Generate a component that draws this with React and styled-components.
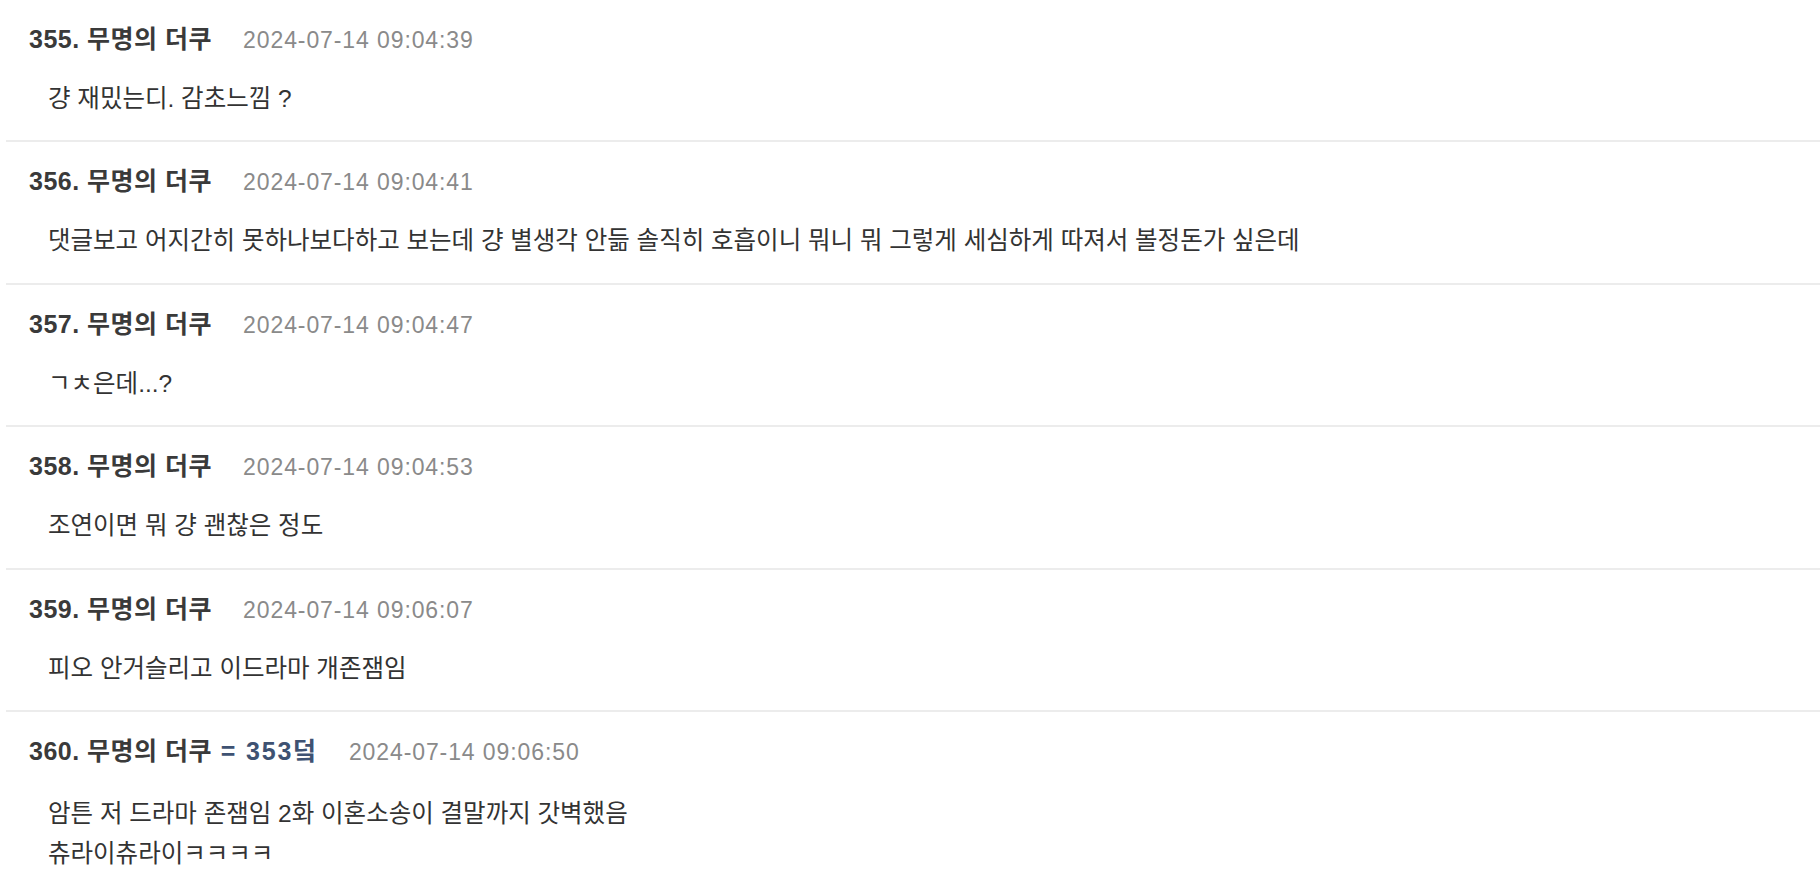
import React from 'react';
import styled, { createGlobalStyle } from 'styled-components';

const GlobalStyle = createGlobalStyle`
  html, body {
    margin: 0;
    padding: 0;
    background: #fff;
  }
  body {
    font-family: "Liberation Sans", "Noto Sans CJK KR", sans-serif;
    overflow: hidden;
  }
`;

const CommentList = styled.ul`
  list-style: none;
  margin: 0 0 0 6px;
  padding: 0;
`;

const CommentItem = styled.li`
  padding: 21px 0 21.4px 23px;
  border-bottom: 2px solid #ececec;
`;

const CommentHeader = styled.div`
  height: 36px;
  line-height: 36px;
  white-space: nowrap;
`;

const Author = styled.span`
  font-size: 25px;
  font-weight: 700;
  letter-spacing: 0.5px;
  color: #3a3a3a;
`;

const Reply = styled.span`
  letter-spacing: 1.8px;
  color: #3e5272;
`;

const Timestamp = styled.span`
  margin-left: 31px;
  font-size: 23px;
  letter-spacing: 0.9px;
  color: #8a8a8a;
`;

const CommentBody = styled.div`
  margin-top: ${(p) => (p.$multiline ? '25px' : '22px')};
  padding-left: 19px;
  font-size: 24.5px;
  line-height: 40px;
  color: #333;
`;

const comments = [
  { no: 355, time: '2024-07-14 09:04:39', lines: ['걍 재밌는디. 감초느낌 ?'] },
  {
    no: 356,
    time: '2024-07-14 09:04:41',
    lines: ['댓글보고 어지간히 못하나보다하고 보는데 걍 별생각 안듦 솔직히 호흡이니 뭐니 뭐 그렇게 세심하게 따져서 볼정돈가 싶은데'],
  },
  { no: 357, time: '2024-07-14 09:04:47', lines: ['ㄱㅊ은데...?'] },
  { no: 358, time: '2024-07-14 09:04:53', lines: ['조연이면 뭐 걍 괜찮은 정도'] },
  { no: 359, time: '2024-07-14 09:06:07', lines: ['피오 안거슬리고 이드라마 개존잼임'] },
  {
    no: 360,
    reply: 353,
    time: '2024-07-14 09:06:50',
    lines: ['암튼 저 드라마 존잼임 2화 이혼소송이 결말까지 갓벽했음', '츄라이츄라이ㅋㅋㅋㅋ'],
  },
];

const App = () => (
  <>
    <GlobalStyle />
    <CommentList>
      {comments.map((c) => (
        <CommentItem key={c.no}>
          <CommentHeader>
            <Author>
              {c.no}. 무명의 더쿠
              {c.reply && <Reply> = {c.reply}덬</Reply>}
            </Author>
            <Timestamp>{c.time}</Timestamp>
          </CommentHeader>
          <CommentBody $multiline={c.lines.length > 1}>
            {c.lines.map((line, i) => (
              <div key={i}>{line}</div>
            ))}
          </CommentBody>
        </CommentItem>
      ))}
    </CommentList>
  </>
);

export default App;
